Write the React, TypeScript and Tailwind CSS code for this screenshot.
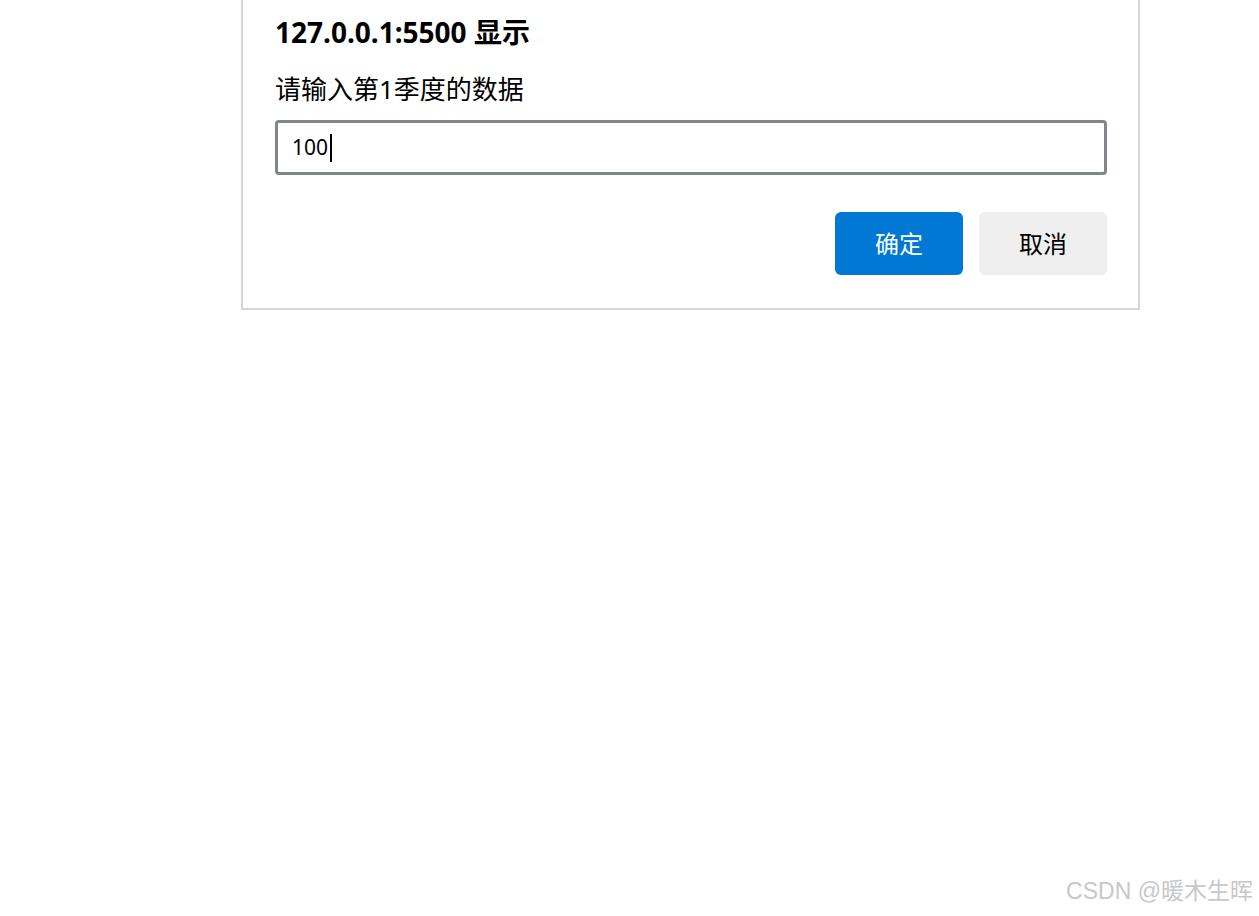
export default function App() {
  const font = { fontFamily: '"Noto Sans", "Noto Sans CJK SC", sans-serif' };
  return (
    <div className="relative w-[1259px] h-[916px] bg-white overflow-hidden" style={font}>
      <div className="ml-[241px] w-[899px] border-2 border-t-0 border-[#d5d5d5] pl-[32px] pr-[31px] pb-[33px] flex flex-col">
        <div className="mt-[12px] h-[41px] leading-[41px] text-[28px] font-bold text-black whitespace-nowrap">
          127.0.0.1:5500 显示
        </div>
        <div className="mt-[16px] h-[40px] leading-[40px] text-[26px] text-black whitespace-nowrap">
          请输入第1季度的数据
        </div>
        <div className="mt-[11px] h-[55px] border-[3px] border-[#80868b] rounded-[4px] flex items-center pl-[14px] text-[21px] text-black">
          <span>100</span>
          <span className="ml-[2px] w-[2px] h-[28px] bg-black" />
        </div>
        <div className="mt-[37px] flex justify-end gap-[16px]">
          <div className="w-[128px] h-[63px] rounded-[6px] bg-[#0078d4] text-white text-[24px] flex items-center justify-center">
            确定
          </div>
          <div className="w-[128px] h-[63px] rounded-[6px] bg-[#efefef] text-black text-[24px] flex items-center justify-center">
            取消
          </div>
        </div>
      </div>
      <div className="absolute right-[6px] bottom-[8px] text-[23px] text-[#c8c8c8] whitespace-nowrap" style={{ fontFamily: '"Liberation Sans", "Noto Sans CJK SC", sans-serif' }}>
        CSDN @暖木生晖
      </div>
    </div>
  );
}
